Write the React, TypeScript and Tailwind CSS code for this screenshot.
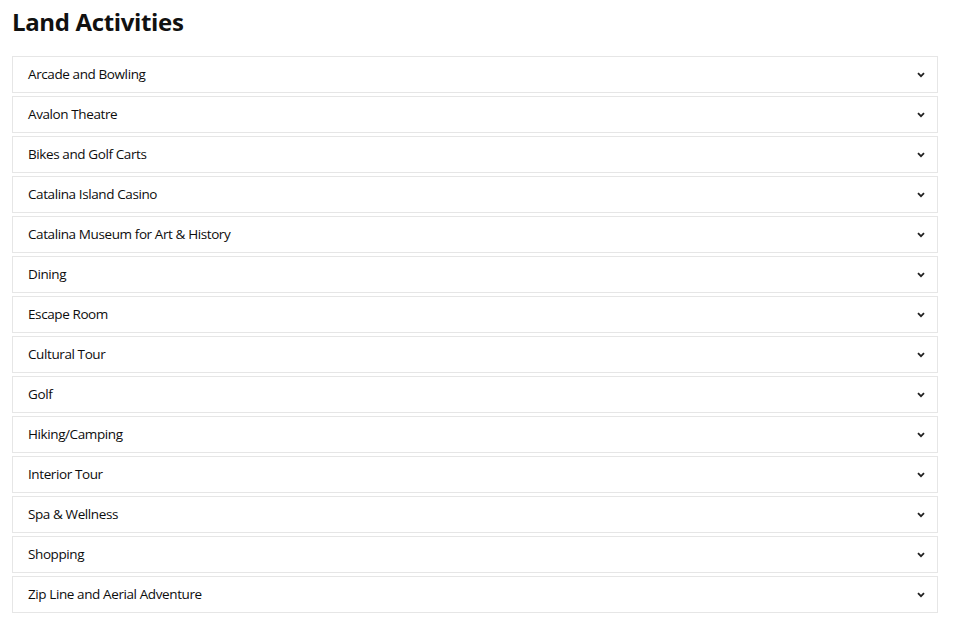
import React from "react";

const items = [
  "Arcade and Bowling",
  "Avalon Theatre",
  "Bikes and Golf Carts",
  "Catalina Island Casino",
  "Catalina Museum for Art & History",
  "Dining",
  "Escape Room",
  "Cultural Tour",
  "Golf",
  "Hiking/Camping",
  "Interior Tour",
  "Spa & Wellness",
  "Shopping",
  "Zip Line and Aerial Adventure",
];

function Chevron() {
  return (
    <svg width="8" height="6" viewBox="0 0 8 6" className="shrink-0">
      <path d="M1 1.2 L4 4.2 L7 1.2" fill="none" stroke="#222" strokeWidth="1.8" />
    </svg>
  );
}

export default function App() {
  return (
    <div className="bg-white min-h-[625px] px-3 pt-[5px]" style={{ fontFamily: '"Open Sans", sans-serif' }}>
      <h1 className="text-[24px] font-bold text-[#111] leading-[34px] tracking-[-0.35px]">Land Activities</h1>
      <div className="mt-[17px] w-[926px] flex flex-col gap-[3px]">
        {items.map((t) => (
          <div
            key={t}
            className="h-[37px] border border-[#e6e6e6] flex items-center justify-between pl-[15px] pr-[12px]"
          >
            <span className="text-[13.5px] tracking-[-0.4px] text-[#0d0d0d]">{t}</span>
            <Chevron />
          </div>
        ))}
      </div>
    </div>
  );
}
